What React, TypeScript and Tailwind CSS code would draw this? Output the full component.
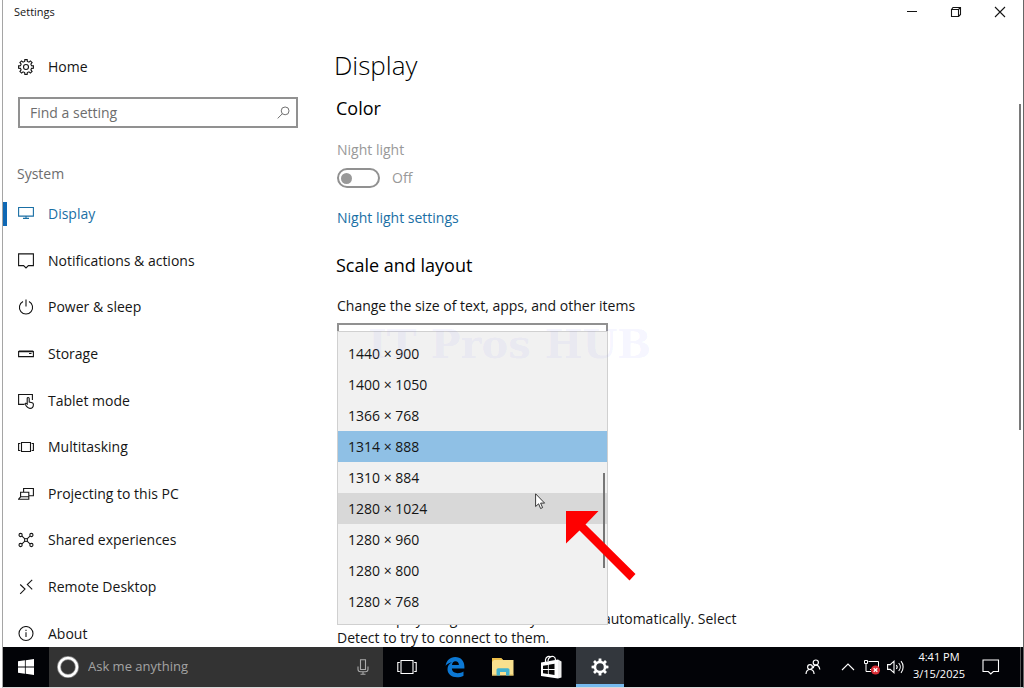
import type { ReactNode } from "react";

function Icon({ children, className = "size-4", box = "0 0 16 16", width = 1.1 }: { children: ReactNode; className?: string; box?: string; width?: number }) {
  return (
    <svg viewBox={box} className={className} fill="none" stroke="currentColor" strokeWidth={width} aria-hidden="true">
      {children}
    </svg>
  );
}

function gearPath(c: number, outer: number, inner: number, teeth: number) {
  const pts: string[] = [];
  const step = (Math.PI * 2) / teeth;
  const at = (r: number, a: number) => `${(c + r * Math.cos(a)).toFixed(2)} ${(c + r * Math.sin(a)).toFixed(2)}`;
  for (let i = 0; i < teeth; i++) {
    const a = i * step - Math.PI / 2;
    pts.push(at(inner, a - step * 0.3), at(outer, a - step * 0.2), at(outer, a + step * 0.2), at(inner, a + step * 0.3));
  }
  return `M${pts.join("L")}Z`;
}

const navItems: { label: string; icon: ReactNode }[] = [
  { label: "Display", icon: <path d="M.6 1.500h14.800v8.600H.6zM8 10v2.300M5 12.400h6" /> },
  { label: "Notifications & actions", icon: <path d="M.6 .9h14.800v11.700h-5L8 15l-2.400-2.400h-5z" /> },
  { label: "Power & sleep", icon: <path d="M8 .5v7M5 2.500a6.600 6.600 0 1 0 6 0" /> },
  { label: "Storage", icon: <path d="M.6 5.600h14.800v5H.6zM.8 5h14.400M11 7.500h2.500" /> },
  {
    label: "Tablet mode",
    icon: (
      <>
        <path d="M6.500 11.400H.6V1.500h13.800V7" />
        <path d="M9.200 10.500V5.600c0-1.500 2-1.500 2 0v3.500l3 .7c1 .3 1.200.8 1.200 1.700 0 2.500-1 3.900-3.500 3.900-2 0-2.900-.9-4.700-4.100-.4-1 .7-1.600 2-.3z" />
      </>
    ),
  },
  { label: "Multitasking", icon: <path d="M3.500 3.500h9v9h-9zM2.400 4.500H.6v7h1.800M13.600 4.500h1.800v7h-1.800" /> },
  { label: "Projecting to this PC", icon: <path d="M5.600 6V2.500h9.800v7.200H11M2.600 6.200h8.200v4.600H2.600zM2.600 10.800L.6 13.200h10.200V10.800" /> },
  {
    label: "Shared experiences",
    icon: (
      <>
        <path d="M4 4.200l2.900 2.700M12 4.200L9.100 6.900M4 11.800l2.900-2.700M12 11.800L9.100 9.100" />
        <circle cx="2.600" cy="3" r="1.600" /><circle cx="13.400" cy="3" r="1.600" />
        <circle cx="2.600" cy="13" r="1.600" /><circle cx="13.400" cy="13" r="1.600" />
        <circle cx="8" cy="8" r="1.500" />
      </>
    ),
  },
  { label: "Remote Desktop", icon: <path d="M2.200 5.500l4.800 4.600-4.800 4.700M14.200 .8L9.300 5.600l4.900 4.800" /> },
  {
    label: "About",
    icon: (
      <>
        <circle cx="8" cy="7.500" r="7" />
        <path d="M8 6.300v4.700M8 3.700v1.300" />
      </>
    ),
  },
];

const resolutions = ["1440 × 900", "1400 × 1050", "1366 × 768", "1314 × 888", "1310 × 884", "1280 × 1024", "1280 × 960", "1280 × 800", "1280 × 768"];
const selected = "1314 × 888";
const hovered = "1280 × 1024";

function TitleBar() {
  return (
    <header className="flex h-6 shrink-0 items-center justify-between pr-px pl-[11px]">
      <span className="text-[11px] leading-4">Settings</span>
      <div className="flex">
        <button aria-label="Minimize" className="flex h-6 w-11 items-center justify-center">
          <Icon className="size-3" box="0 0 12 12" width={1}><path d="M1 5.500h10" /></Icon>
        </button>
        <button aria-label="Restore" className="flex h-6 w-11 items-center justify-center">
          <Icon className="size-3" box="0 0 12 12"><path d="M1.500 3.500h7v7h-7zM1.500 3.500l1.500-2h7.500v7l-2 2M8.500 3.500l2-2" /></Icon>
        </button>
        <button aria-label="Close" className="flex h-6 w-11 items-center justify-center">
          <Icon className="size-3" box="0 0 12 12"><path d="M1 1l10 10M11 1L1 11" /></Icon>
        </button>
      </div>
    </header>
  );
}

function Sidebar() {
  return (
    <aside className="flex w-[319px] shrink-0 flex-col pt-7 text-sm">
      <a href="#home" className="flex h-[30px] shrink-0 items-center gap-[14px] pl-[15px]">
        <Icon><path d={gearPath(8, 7.5, 5.7, 8)} /><circle cx="8" cy="8" r="2.500" /></Icon>
        Home
      </a>
      <label className="mt-[15px] mr-6 ml-[15px] flex h-[31px] shrink-0 items-center border-2 border-[#919191] pr-1.5 pl-2.5 text-[#6d6d6d]">
        <input aria-label="Find a setting" placeholder="Find a setting" className="min-w-0 flex-1 outline-none placeholder:text-[#6d6d6d]" />
        <Icon className="size-[13px]" width={1.2}><circle cx="10" cy="6" r="4.800" /><path d="M6.600 9.500L.8 15.300" /></Icon>
      </label>
      <h2 className="mt-9 shrink-0 pl-3.5 leading-5 text-[#6d6d6d]">System</h2>
      <nav className="mt-[7px] grid h-[466px] shrink-0 grid-rows-10">
        {navItems.map(({ label, icon }, i) => (
          <a key={label} href="#section" className={i === 0 ? "flex items-center text-[#1a6fa5]" : "flex items-center"}>
            <span className={i === 0 ? "h-6 w-1 bg-[#0f68b4]" : "h-6 w-1"} />
            <span className="mr-[14px] ml-[11px]"><Icon>{icon}</Icon></span>
            {label}
          </a>
        ))}
      </nav>
    </aside>
  );
}

function ResolutionList() {
  return (
    <div className="absolute top-2 left-0 w-full border border-[#d0d0d0] bg-[#f1f1f1] pt-[6px] pb-[7px]">
      <div role="listbox" aria-label="Resolution">
        {resolutions.map((r) => (
          <button
            key={r}
            role="option"
            aria-selected={r === selected}
            className={
              r === selected
                ? "block h-[31px] w-full bg-[#8fc0e5] pl-2.5 text-left"
                : r === hovered
                  ? "block h-[31px] w-full bg-[#d8d8d8] pl-2.5 text-left"
                  : "block h-[31px] w-full pl-2.5 text-left"
            }
          >
            {r}
          </button>
        ))}
      </div>
      <span className="absolute top-[141px] right-0.5 h-[95px] w-0.5 bg-[#777]" />
      <span className="pointer-events-none absolute top-0 left-[30px] font-['DejaVu_Serif',serif] text-[40px] leading-6 font-bold whitespace-nowrap text-[#7878ff]/8">
        IT Pros HUB
      </span>
      <svg viewBox="0 0 11 17" className="absolute top-[161px] left-[197px] h-[17px] w-[11px]" aria-hidden="true">
        <path d="M.6 .8v12.700l3-2.700 2 4.700 2-.9-2-4.500h4z" fill="#fff" stroke="#222" strokeWidth=".9" />
      </svg>
      <svg viewBox="0 0 70 70" className="absolute top-[179px] left-[228px] size-[70px]" aria-hidden="true">
        <path d="M0 0h32.500L19.500 13.500 69.500 63l-6 6.500L13.500 19.500 0 32.500z" fill="#fe0000" />
      </svg>
    </div>
  );
}

function DisplayPage() {
  return (
    <main className="flex min-w-0 flex-1 justify-between text-sm">
      <div className="w-[420px] pt-[21px] pl-[15px]">
        <h1 className="-ml-[3px] text-[26px] leading-10 font-light text-black">Display</h1>
        <h2 className="-ml-px mt-[9px] text-lg leading-7 text-black">Color</h2>
        <div className="mt-[18px] leading-5 text-[#999]">Night light</div>
        <div className="mt-2 flex h-5 items-center gap-3 text-[#999]">
          <button role="switch" aria-checked="false" aria-label="Night light" disabled className="flex h-5 w-[43px] items-center rounded-full border-2 border-[#919191] pl-0.5">
            <span className="size-[11px] rounded-full bg-[#999]" />
          </button>
          Off
        </div>
        <a href="#night-light" className="mt-5 block leading-5 text-[#1a6fa5]">Night light settings</a>
        <h2 className="-ml-px mt-[23px] text-lg leading-7 text-black">Scale and layout</h2>
        <label htmlFor="scale" className="mt-[17px] block leading-5">Change the size of text, apps, and other items</label>
        <div className="relative mt-[7px] mr-[134px]">
          <select id="scale" className="block h-[31px] w-full appearance-none border-2 border-[#919191]" />
          <ResolutionList />
        </div>
        <p className="mt-[255px] leading-[19px]">Older displays might not always connect automatically. Select Detect to try to connect to them.</p>
      </div>
      <span className="mt-20 mr-0.5 h-[326px] w-0.5 bg-[#7a7a7a]" />
    </main>
  );
}

function TaskButton({ label, children, active = false }: { label: string; children: ReactNode; active?: boolean }) {
  return (
    <button
      aria-label={label}
      className={active ? "ml-px flex w-12 shrink-0 items-center justify-center border-b-[3px] border-[#76b9ed] bg-[#33373d] pt-[3px]" : "flex w-12 shrink-0 items-center justify-center"}
    >
      {children}
    </button>
  );
}

function Taskbar() {
  return (
    <footer className="flex h-10 shrink-0 bg-[#020307] text-white">
      <button aria-label="Start" className="flex w-[46px] shrink-0 items-center justify-center">
        <svg viewBox="0 0 16 16" className="size-4" fill="#fff" aria-hidden="true">
          <path d="M0 2.300L6.900 1.300v6.300H0zM7.700 1.200L16 0v7.600H7.700zM0 8.400h6.900v6.300L0 13.700zM7.700 8.400H16V16l-8.300-1.200z" />
        </svg>
      </button>
      <label className="flex w-[334px] shrink-0 items-center bg-[#333] pr-3 pl-[7px]">
        <svg viewBox="0 0 24 24" className="size-6" aria-hidden="true">
          <circle cx="12" cy="12" r="9" fill="none" stroke="#888" strokeWidth="4" />
          <circle cx="12" cy="12" r="9" fill="none" stroke="#fff" strokeWidth="2.500" />
        </svg>
        <input aria-label="Ask me anything" placeholder="Ask me anything" className="ml-2 min-w-0 flex-1 text-[13px] outline-none placeholder:text-[#a3a3a3]" />
        <span className="text-[#aaa]">
          <Icon className="size-4"><path d="M5.500 .8h5v9.700h-5zM3 7.500v2.700c0 1.500 1 2.500 2.500 2.500h5c1.500 0 2.500-1 2.500-2.500V7.500M8 12.800v2.500M5.500 15.300h5" /></Icon>
        </span>
      </label>
      <TaskButton label="Task view">
        <Icon className="h-4 w-5" box="0 0 20 16"><path d="M4 1.500h12v13H4zM2.800 3.500H.8v9h2M17.200 3.500h2v9h-2" /></Icon>
      </TaskButton>
      <TaskButton label="Edge">
        <svg viewBox="0 0 20 22" className="h-[22px] w-5" fill="#0c78d4" aria-hidden="true">
          <path d="M.6 9.800C1.300 4.500 4.900.9 10.200.9c5.800 0 9.200 4.200 9.200 9.500v2.200H6.900c.1 3.300 2.900 4.600 5.700 4.600 2.300 0 4.300-.7 5.900-1.700v4.200c-1.900 1.100-4.100 1.600-6.500 1.600-5.600 0-9.500-3.300-9.500-8 0-3.100 1.600-5.700 4.500-7-2.500.5-4.800 1.800-6.400 3.500zM7 8.900h6.900c0-2.300-1.300-3.700-3.500-3.700C8.500 5.200 7.200 6.700 7 8.900z" />
        </svg>
      </TaskButton>
      <TaskButton label="File Explorer">
        <svg viewBox="0 0 22 18" className="h-[18px] w-[22px]" aria-hidden="true">
          <path d="M0 0h9l2 2h10.500v15.500H0z" fill="#f8e08e" />
          <path d="M0 0h9l2 2H2L0 4z" fill="#eebf4a" />
          <path d="M4.500 17.500V12c0-1 .7-1.700 1.700-1.700h9.600c1 0 1.700.7 1.700 1.700v5.500H14V14H8v3.500z" fill="#42b3cf" />
          <path d="M0 17h4.500M17.500 17h4" stroke="#d7b95b" />
        </svg>
      </TaskButton>
      <TaskButton label="Store">
        <svg viewBox="0 0 22 24" className="h-6 w-[22px]" aria-hidden="true">
          <path d="M5.500 7V4.500C6 1.500 9 .6 11 2.200M8 6C8 2.500 11 .8 13.500 1.500 15 2 15.500 3.500 15.500 5" fill="none" stroke="#fff" strokeWidth="1.200" />
          <path d="M1 7.500L18 4.500v19L1 21z" fill="#fff" />
          <path d="M18 4.500l3.500 2v16l-3.500 1z" fill="#eee" />
          <path d="M3 10.700l4.900-.8v4.200H3zM8.700 9.800l5.800-1v5.300H8.700zM3 14.900h4.900v4l-4.900-.7zM8.700 14.900h5.800v5l-5.800-.9z" fill="#080808" />
        </svg>
      </TaskButton>
      <TaskButton label="Settings" active>
        <svg viewBox="0 0 20 20" className="size-[18px]" aria-hidden="true">
          <path d={`${gearPath(10, 9.5, 7, 8)}M10 5.800a4.200 4.200 0 1 0 0 8.400a4.200 4.200 0 1 0 0-8.400Z`} fill="#fff" fillRule="evenodd" />
        </svg>
      </TaskButton>
      <div className="ml-auto flex items-center">
        <button aria-label="People">
          <Icon width={1.2}>
            <circle cx="10.800" cy="3.600" r="2.600" /><path d="M8.200 9.200c.2-1.900 1.200-3 2.600-3s3.500.8 4 4.300" />
            <circle cx="5" cy="8" r="2.400" /><path d="M1 15c.2-3 1.700-4.500 4-4.500S8.900 12 9.100 15" />
          </Icon>
        </button>
        <button aria-label="Show hidden icons" className="ml-5">
          <Icon className="h-4 w-3.5" box="0 0 14 16"><path d="M1 11l6-6 6 6" /></Icon>
        </button>
        <button aria-label="Network" className="ml-2">
          <svg viewBox="0 0 18 16" className="h-4 w-[18px]" fill="none" stroke="#fff" aria-hidden="true">
            <path d="M5.500 2.500h10v8M1.500 1.500h3v3h-3zM3 4.500v8h5M7 10.500h3" />
            <circle cx="12.500" cy="11" r="4.600" fill="#d92d35" stroke="none" />
            <path d="M10.700 9.200l3.600 3.600M14.300 9.200l-3.600 3.600" strokeWidth="1.300" />
          </svg>
        </button>
        <button aria-label="Volume" className="ml-1.5">
          <Icon className="h-4 w-[18px]" box="0 0 18 16"><path d="M.6 5.600h2.600L7 2.200v11.600L3.200 10.400H.6zM9.300 6a3 3 0 0 1 0 4M11.700 4a6 6 0 0 1 0 8M14 2.200a9 9 0 0 1 0 11.600" /></Icon>
        </button>
        <time className="ml-[5px] w-[58px] pb-1 text-center text-[11px] leading-[17px]">
          4:41 PM
          <br />
          3/15/2025
        </time>
        <button aria-label="Action center" className="mr-5 ml-3.5">
          <Icon className="h-4 w-[18px]" box="0 0 18 16"><path d="M1 1h15.500v11.500h-5.200L8.800 15l-2.500-2.500H1z" /></Icon>
        </button>
        <span className="h-10 w-[3px] border-l border-[#555]" />
      </div>
    </footer>
  );
}

export default function App() {
  return (
    <div className="h-screen overflow-hidden bg-white pl-0.5 font-['Open_Sans','Noto_Sans',sans-serif] text-[#151515]">
      <div className="flex h-full flex-col border-r border-b border-l border-r-[#666] border-b-[#d8d8d8] border-l-[#a5a5a5]">
        <TitleBar />
        <div className="flex min-h-0 flex-1 overflow-hidden">
          <Sidebar />
          <DisplayPage />
        </div>
        <Taskbar />
      </div>
    </div>
  );
}
